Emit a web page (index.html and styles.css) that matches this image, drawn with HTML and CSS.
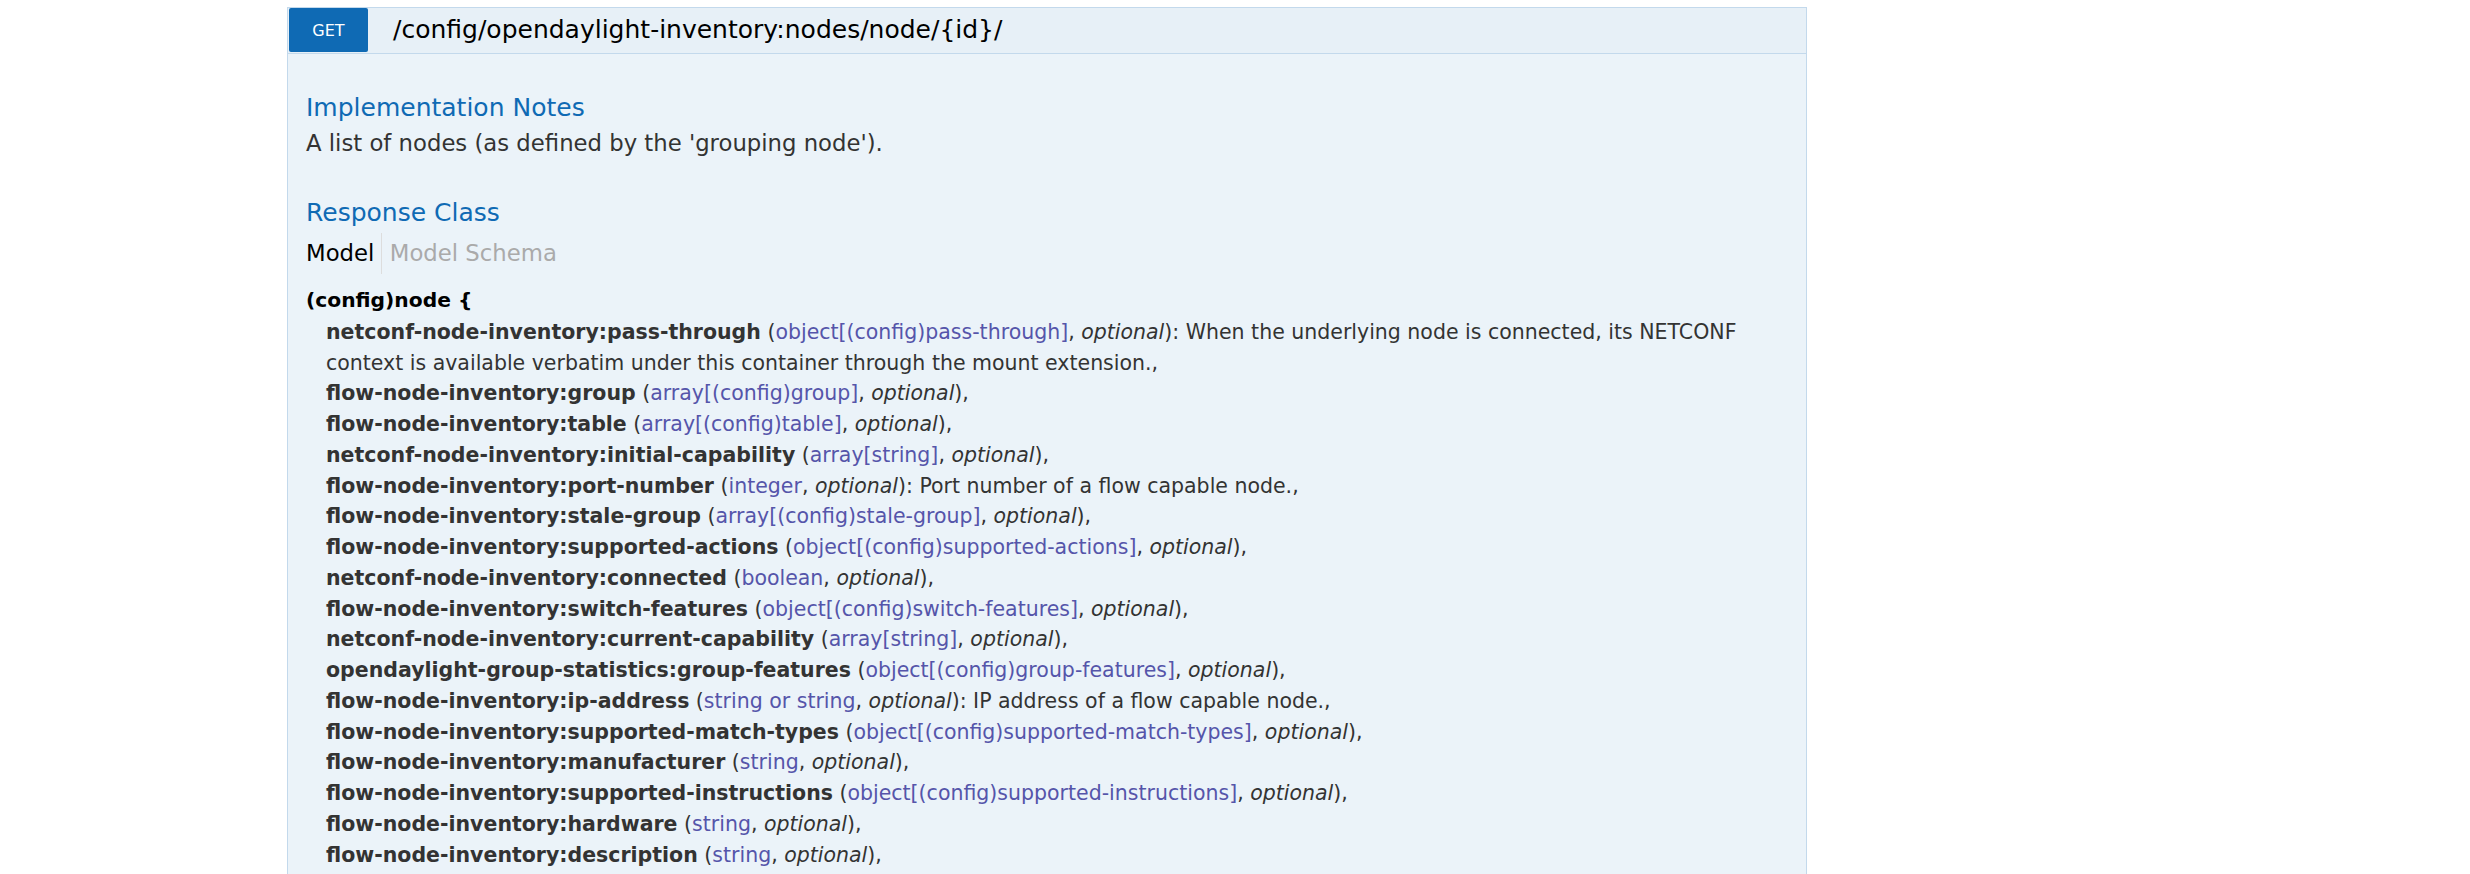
FILE: index.html
```html
<!DOCTYPE html>
<html>
<head>
<meta charset="utf-8">
<link rel="stylesheet" href="styles.css">
</head>
<body>
<div class="operation">
  <div class="heading">
    <span class="method">GET</span>
    <span class="path">/config/opendaylight-inventory:nodes/node/{id}/</span>
  </div>
  <div class="content">
    <h4 class="title first">Implementation Notes</h4>
    <p class="notes">A list of nodes (as defined by the 'grouping node').</p>
    <h4 class="title">Response Class</h4>
    <ul class="sig-nav">
      <li class="selected">Model</li>
      <li class="other">Model Schema</li>
    </ul>
    <div class="signature">
      <div class="model-name">(config)node {</div>
      <div class="props">
        <div class="prop"><span class="pname">netconf-node-inventory:pass-through</span> (<span class="ptype">object[(config)pass-through]</span>, <span class="popt">optional</span>)<span class="pdesc">: When the underlying node is connected, its NETCONF</span> <span class="pdesc">context is available verbatim under this container through the mount extension.,</span></div>
        <div class="prop"><span class="pname">flow-node-inventory:group</span> (<span class="ptype">array[(config)group]</span>, <span class="popt">optional</span>),</div>
        <div class="prop"><span class="pname">flow-node-inventory:table</span> (<span class="ptype">array[(config)table]</span>, <span class="popt">optional</span>),</div>
        <div class="prop"><span class="pname">netconf-node-inventory:initial-capability</span> (<span class="ptype">array[string]</span>, <span class="popt">optional</span>),</div>
        <div class="prop"><span class="pname">flow-node-inventory:port-number</span> (<span class="ptype">integer</span>, <span class="popt">optional</span>): Port number of a flow capable node.,</div>
        <div class="prop"><span class="pname">flow-node-inventory:stale-group</span> (<span class="ptype">array[(config)stale-group]</span>, <span class="popt">optional</span>),</div>
        <div class="prop"><span class="pname">flow-node-inventory:supported-actions</span> (<span class="ptype">object[(config)supported-actions]</span>, <span class="popt">optional</span>),</div>
        <div class="prop"><span class="pname">netconf-node-inventory:connected</span> (<span class="ptype">boolean</span>, <span class="popt">optional</span>),</div>
        <div class="prop"><span class="pname">flow-node-inventory:switch-features</span> (<span class="ptype">object[(config)switch-features]</span>, <span class="popt">optional</span>),</div>
        <div class="prop"><span class="pname">netconf-node-inventory:current-capability</span> (<span class="ptype">array[string]</span>, <span class="popt">optional</span>),</div>
        <div class="prop"><span class="pname">opendaylight-group-statistics:group-features</span> (<span class="ptype">object[(config)group-features]</span>, <span class="popt">optional</span>),</div>
        <div class="prop"><span class="pname">flow-node-inventory:ip-address</span> (<span class="ptype">string or string</span>, <span class="popt">optional</span>): IP address of a flow capable node.,</div>
        <div class="prop"><span class="pname">flow-node-inventory:supported-match-types</span> (<span class="ptype">object[(config)supported-match-types]</span>, <span class="popt">optional</span>),</div>
        <div class="prop"><span class="pname">flow-node-inventory:manufacturer</span> (<span class="ptype">string</span>, <span class="popt">optional</span>),</div>
        <div class="prop"><span class="pname">flow-node-inventory:supported-instructions</span> (<span class="ptype">object[(config)supported-instructions]</span>, <span class="popt">optional</span>),</div>
        <div class="prop"><span class="pname">flow-node-inventory:hardware</span> (<span class="ptype">string</span>, <span class="popt">optional</span>),</div>
        <div class="prop"><span class="pname">flow-node-inventory:description</span> (<span class="ptype">string</span>, <span class="popt">optional</span>),</div>
      </div>
    </div>
  </div>
</div>
</body>
</html>
```
FILE: styles.css
```css
html, body {
  margin: 0;
  padding: 0;
  background: #ffffff;
}
body {
  font-family: "DejaVu Sans", sans-serif;
  color: #333333;
  height: 874px;
  overflow: hidden;
}
.operation {
  margin: 7px 0 0 287px;
  width: 1520px;
  box-sizing: border-box;
}
.heading {
  display: flex;
  align-items: center;
  height: 47px;
  box-sizing: border-box;
  padding: 0 0 1px 1px;
  background: #e7f0f7;
  border: 1px solid #c3d9ec;
}
.method {
  display: flex;
  align-items: center;
  justify-content: center;
  width: 79px;
  height: 44px;
  align-self: flex-start;
  background: #0f6ab4;
  color: #ffffff;
  font-size: 16px;
  border-radius: 2px;
}
.path {
  margin-left: 25px;
  font-size: 25px;
  color: #000000;
  line-height: 30px;
}
.content {
  background: #ebf3f9;
  border: 1px solid #c3d9ec;
  border-top: none;
  padding: 15px 18px 0 18px;
  height: 900px;
}
.title {
  margin: 0;
  padding: 23px 0 5px 0;
  font-size: 25px;
  font-weight: normal;
  line-height: 30px;
  color: #0f6ab4;
}
.title.first {
  padding-top: 24px;
}
.notes {
  margin: 0;
  padding: 0 0 15px 0;
  font-size: 22.75px;
  line-height: 31.5px;
  color: #333333;
}
.sig-nav {
  list-style: none;
  margin: 0 0 3px 0;
  padding: 0;
  display: flex;
}
.sig-nav li {
  font-size: 22.75px;
  line-height: 35px;
  padding: 3px 7px 3px 0;
  margin-right: 7.5px;
  border-right: 1px solid #dddddd;
}
.sig-nav li.selected {
  color: #000000;
}
.sig-nav li.other {
  color: #aaaaaa;
  border-right: none;
}
.signature {
  padding-top: 8px;
}
.model-name {
  font-size: 20.25px;
  font-weight: bold;
  color: #000000;
  line-height: 30.75px;
}
.props {
  margin-left: 20px;
  padding-top: 1.5px;
}
.prop {
  font-size: 20.5px;
  line-height: 30.75px;
  color: #333333;
}
.pname {
  font-weight: bold;
}
.ptype {
  color: #5555aa;
}
.popt {
  font-style: italic;
}
```
